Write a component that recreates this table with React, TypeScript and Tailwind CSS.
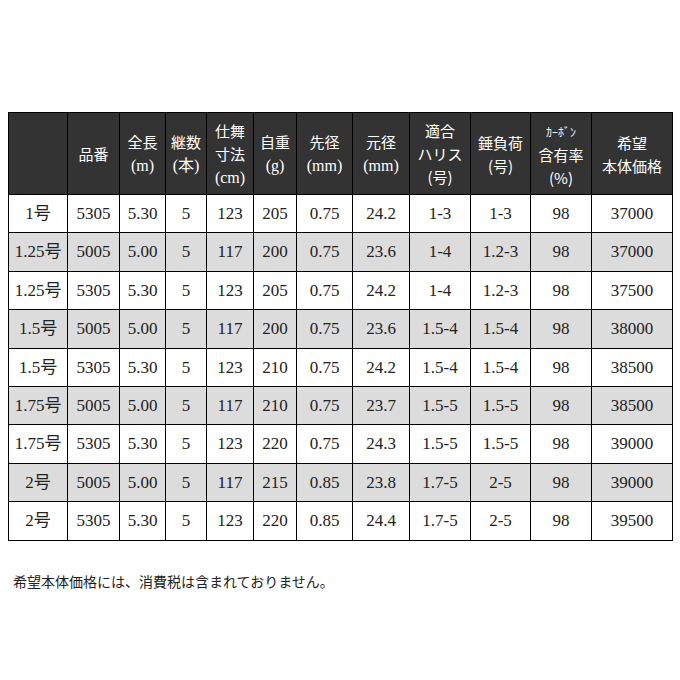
const widths = [59, 52, 46, 41, 47, 43, 56, 57, 61, 60, 61, 81];

const serif = "font-['Liberation_Serif','Noto_Sans_CJK_JP',serif] text-[16px]";

const headers: React.ReactNode[] = [
  '',
  '品番',
  <>全長<br /><span className={serif}>(m)</span></>,
  <>継数<br /><span className={serif}>(本)</span></>,
  <>仕舞<br />寸法<br /><span className={serif}>(cm)</span></>,
  <>自重<br /><span className={serif}>(g)</span></>,
  <>先径<br /><span className={serif}>(mm)</span></>,
  <>元径<br /><span className={serif}>(mm)</span></>,
  <>適合<br />ハリス<br />(号)</>,
  <>錘負荷<br />(号)</>,
  <><span className="text-[12px]">ｶｰﾎﾞﾝ</span><br />含有率<br />(%)</>,
  <>希望<br />本体価格</>,
];

const rows = [
  ['1号', '5305', '5.30', '5', '123', '205', '0.75', '24.2', '1-3', '1-3', '98', '37000'],
  ['1.25号', '5005', '5.00', '5', '117', '200', '0.75', '23.6', '1-4', '1.2-3', '98', '37000'],
  ['1.25号', '5305', '5.30', '5', '123', '205', '0.75', '24.2', '1-4', '1.2-3', '98', '37500'],
  ['1.5号', '5005', '5.00', '5', '117', '200', '0.75', '23.6', '1.5-4', '1.5-4', '98', '38000'],
  ['1.5号', '5305', '5.30', '5', '123', '210', '0.75', '24.2', '1.5-4', '1.5-4', '98', '38500'],
  ['1.75号', '5005', '5.00', '5', '117', '210', '0.75', '23.7', '1.5-5', '1.5-5', '98', '38500'],
  ['1.75号', '5305', '5.30', '5', '123', '220', '0.75', '24.3', '1.5-5', '1.5-5', '98', '39000'],
  ['2号', '5005', '5.00', '5', '117', '215', '0.85', '23.8', '1.7-5', '2-5', '98', '39000'],
  ['2号', '5305', '5.30', '5', '123', '220', '0.85', '24.4', '1.7-5', '2-5', '98', '39500'],
];

export default function App() {
  return (
    <div className="w-[680px] h-[680px] bg-white pt-[112px] px-2">
      <table className="w-[664px] table-fixed border-collapse">
        <colgroup>
          {widths.map((w, i) => (
            <col key={i} style={{ width: w }} />
          ))}
        </colgroup>
        <thead>
          <tr className="h-[82px] bg-[#333333]">
            {headers.map((h, i) => (
              <th
                key={i}
                className="border border-black p-0 text-center align-middle text-[15px] font-normal leading-[23px] text-white font-['Noto_Sans_CJK_JP',sans-serif]"
              >
                {h}
              </th>
            ))}
          </tr>
        </thead>
        <tbody>
          {rows.map((r, i) => (
            <tr key={i} className={`h-[38.4px] ${i % 2 === 1 ? 'bg-[#dcdcdc]' : 'bg-white'}`}>
              {r.map((c, j) => (
                <td
                  key={j}
                  className="border border-black p-0 text-center align-middle text-[17px] text-[#222] font-['Liberation_Serif','Noto_Sans_CJK_JP',serif]"
                >
                  {c}
                </td>
              ))}
            </tr>
          ))}
        </tbody>
      </table>
      <p className="mt-[30px] pl-[5px] text-[14px] text-[#222] font-['Noto_Sans_CJK_JP',sans-serif]">
        希望本体価格には、消費税は含まれておりません。
      </p>
    </div>
  );
}
